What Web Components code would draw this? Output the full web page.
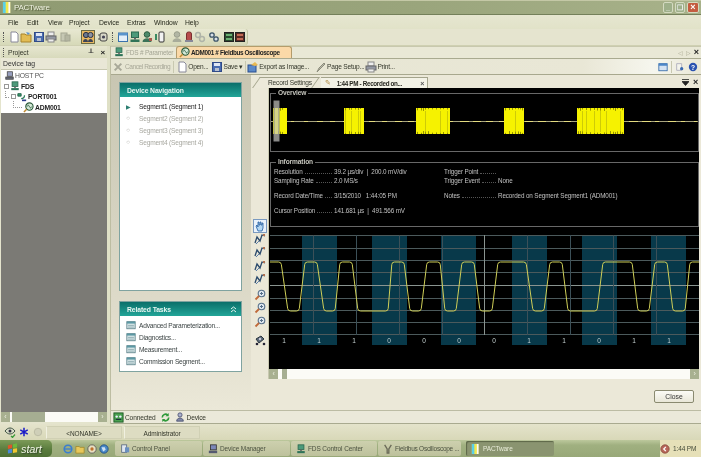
<!DOCTYPE html>
<html>
<head>
<meta charset="utf-8">
<title>PACTware</title>
<style>
    html, body { margin: 0; padding: 0; }
    body { width: 701px; height: 457px; overflow: hidden; background: #ebe8d8; font-family: "Liberation Sans", Arial, sans-serif; font-size: 7px; color: #333; filter: blur(.3px); }
    .main { display: flex; height: 378px; background: #dfe0c6; }
</style>
</head>
<body>
<pact-titlebar></pact-titlebar>
<pact-menubar></pact-menubar>
<pact-toolbar></pact-toolbar>
<div class="main">
    <project-panel></project-panel>
    <doc-panel></doc-panel>
</div>
<pact-status></pact-status>
<win-taskbar></win-taskbar>

<script>
const ICONS = {
    doc: '<path d="M3 1h5l2 2v8H3z" fill="#fff" stroke="#889"/>',
    folder: '<path d="M1 3h4l1 1h5v7H1z" fill="#e2bc54" stroke="#a8842c"/><path d="M6 1l4 1-2 2z" fill="#5a92d0"/>',
    save: '<rect x="1.500" y="1.500" width="9" height="9" fill="#4a6cb0" stroke="#304a88"/><rect x="3" y="2" width="6" height="3" fill="#dfe6f4"/><rect x="4" y="7" width="4" height="3" fill="#b8c0d0"/>',
    print: '<rect x="3" y="1" width="6" height="4" fill="#eee" stroke="#888"/><rect x="1" y="5" width="10" height="4" fill="#9499a4" stroke="#666"/><rect x="3" y="8" width="6" height="3" fill="#eee" stroke="#888"/>',
    pages: '<rect x="1" y="2" width="6" height="8" fill="#c6c8b4" stroke="#a4a692"/><rect x="5" y="4" width="5" height="6" fill="#b4b6a2" stroke="#a4a692"/>',
    people: '<circle cx="4" cy="4" r="2.600" fill="#6a7890" stroke="#2c3040"/><circle cx="8.500" cy="4" r="2.600" fill="#8a92a0" stroke="#2c3040"/><path d="M1 11c0-4 5-4 5 0zM6 11c0-4 5-4 5 0z" fill="#3a4256"/>',
    chip: '<rect x="3" y="2" width="7" height="8" rx="2" fill="#d8d8c8" stroke="#444"/><circle cx="6.500" cy="6" r="1.600" fill="#445"/><path d="M1 4h2M1 8h2" stroke="#555"/>',
    window: '<rect x="1.500" y="2" width="9" height="8.500" fill="#e4eef8" stroke="#3a72ac"/><rect x="1.500" y="2" width="9" height="2.500" fill="#5a94cc"/>',
    pcgreen: '<rect x="2.500" y="1" width="7" height="5.500" fill="#4c9a7a" stroke="#2a6a50"/><rect x="5" y="6.500" width="2" height="2" fill="#666"/><rect x="1.500" y="8.500" width="9" height="2.500" fill="#2f7358"/>',
    usergreen: '<circle cx="6" cy="3.500" r="2.800" fill="#4c8a6a" stroke="#2c5a40"/><path d="M1.500 11c0-5 9-5 9 0z" fill="#3c7358"/><rect x="8" y="7" width="3" height="3" fill="#a8584c"/>',
    barrel: '<rect x="5" y="1" width="5" height="10" rx="1" fill="#f2f2f2" stroke="#333"/><path d="M2 3v6" stroke="#3a8a62" stroke-width="2"/>',
    usergrey: '<circle cx="6" cy="3.500" r="2.800" fill="#b2b6a4" stroke="#9a9e8c"/><path d="M1.500 11c0-5 9-5 9 0z" fill="#a8ac9a"/>',
    redtag: '<rect x="3.500" y="1" width="5" height="9" rx="2" fill="#b84c4c" stroke="#7a3030"/><rect x="2" y="9" width="8" height="2" fill="#889"/>',
    gears: '<circle cx="4" cy="4" r="2.400" fill="none" stroke="#b0b4a8" stroke-width="1.500"/><circle cx="8" cy="8" r="2.400" fill="none" stroke="#b0b4a8" stroke-width="1.500"/>',
    gearsdark: '<circle cx="4" cy="4" r="2.200" fill="#d8e0e8" stroke="#3c5468" stroke-width="1.300"/><circle cx="8" cy="8" r="2.200" fill="#d8e0e8" stroke="#3c5468" stroke-width="1.300"/>',
    scopegreen: '<rect x="1.500" y="1.500" width="9" height="9" fill="#2a4a2e" stroke="#222"/><rect x="3" y="3" width="6" height="2" fill="#6ab072"/><rect x="3" y="7" width="6" height="2" fill="#6ab072"/>',
    scopered: '<rect x="1.500" y="1.500" width="9" height="9" fill="#5a2a24" stroke="#222"/><rect x="3" y="3" width="6" height="2" fill="#c06a54"/><rect x="3" y="7" width="6" height="2" fill="#c06a54"/>',
    host: '<rect x="3" y="1" width="7" height="6" fill="#98a0c0" stroke="#444"/><rect x="1" y="8" width="10" height="3" fill="#666a78" stroke="#444"/>',
    port: '<path d="M1 2h4v3H1z" fill="#3c9a72" stroke="#1c5a40"/><path d="M5 8c3 0 4-1 4-4" fill="none" stroke="#2c7c5a" stroke-width="1.500"/><path d="M6 10h5" stroke="#2c3c8a" stroke-width="2"/>',
    scope: '<circle cx="7" cy="5" r="4" fill="#d6ead9" stroke="#2a5a3a" stroke-width="1.200"/><path d="M4.500 5c1-2 1.500-2 2.500 0s1.500 2 2.500 0" fill="none" stroke="#2a5a3a"/><path d="M4 8l-3 3" stroke="#c08a30" stroke-width="1.600"/>',
    cancel: '<path d="M2 2l8 8M10 2l-8 8" stroke="#a8a898" stroke-width="2.400"/>',
    exportimg: '<rect x="1" y="4" width="8" height="7" fill="#5a88c8" stroke="#2a4f90"/><path d="M4 4l4-3 3 3-3 1z" fill="#e8b850"/>',
    brush: '<path d="M2 11l2-4 5-5 1 1-5 5z" fill="#b8b8a8" stroke="#8c8c7c"/>',
    panel: '<rect x="1" y="2" width="10" height="8.500" fill="#d4e2f2" stroke="#3268a8"/><rect x="1" y="2" width="10" height="2.500" fill="#4c86c8"/>',
    props: '<path d="M2 2h6v8H2z" fill="#f4f4ec" stroke="#aab"/><circle cx="8" cy="8" r="2" fill="#3a6ab0"/>',
    help: '<circle cx="6" cy="6" r="5" fill="#2a52b0"/><text x="6" y="9" font-size="8" font-weight="700" text-anchor="middle" fill="#fff" font-family="Liberation Sans">?</text>',
    hand: '<path d="M4 11L2 6l1-1 1 2V2h1v3h1V2h1v3h1V3h1v5l-1 3z" fill="#b4d8f4" stroke="#1e5aa0" stroke-width=".8"/>',
    wave: '<path d="M1 10l2-6 3 4 2-6 3 1" fill="none" stroke="#2b4a6c" stroke-width="1.300"/><path d="M2 11l3-3" stroke="#5a7ea8"/><rect x="9" y="1" width="2" height="2" fill="#b07050"/>',
    zoom: '<circle cx="7.500" cy="4.500" r="3.300" fill="#e0e8f0" stroke="#56708a" stroke-width="1.100"/><path d="M5 7l-3.500 3.500" stroke="#c06a3a" stroke-width="1.800"/><path d="M6 4.500h3M7.500 3v3" stroke="#56708a"/>',
    camera: '<path d="M2 5l5-3 3 3-5 4z" fill="#5a6a78" stroke="#2c3640"/><circle cx="3" cy="10" r="1.300" fill="#223"/><circle cx="10" cy="10" r="1.300" fill="#223"/><circle cx="6" cy="5" r="1.200" fill="#ccd"/>',
    task: '<rect x="1" y="2" width="10" height="8.500" fill="#d8e6e8" stroke="#5a8088"/><rect x="1" y="2" width="10" height="2.300" fill="#5c98a4"/><path d="M2.500 6.500h7M2.500 8.500h7" stroke="#8aa8ae"/>',
    connected: '<rect x="1" y="1" width="10" height="10" fill="#48a050" stroke="#1c5a24"/><circle cx="4" cy="5" r="1.300" fill="#eef"/><circle cx="8" cy="5" r="1.300" fill="#eef"/><path d="M3 8h6" stroke="#113"/>',
    sync: '<path d="M2.500 6a3.500 3.500 0 0 1 6-2.500M9.500 6a3.500 3.500 0 0 1-6 2.500" fill="none" stroke="#2f9a3a" stroke-width="1.800"/><path d="M9.500 1v3.500H6M2.500 11V7.500H6" fill="#2f9a3a"/>',
    device: '<circle cx="6" cy="3.500" r="2.500" fill="#aab0cc" stroke="#4a5070"/><path d="M2 11c0-5 8-5 8 0z" fill="#8088a8" stroke="#4a5070"/>',
    eye: '<path d="M1 5c3-4 7-4 10 0-3 4-7 4-10 0z" fill="#d8dcc8" stroke="#3c5040"/><circle cx="6" cy="5" r="1.500" fill="#334"/><path d="M7 10l1.500 1.500 2.500-3" fill="none" stroke="#3a9a3a" stroke-width="1.200"/>',
    star: '<path d="M6 1v10M1.500 3.500l9 5M10.500 3.500l-9 5" stroke="#1a1ac8" stroke-width="1.800"/>',
    info: '<circle cx="6" cy="6" r="4.500" fill="#cfcfb8" stroke="#b8b8a0"/>',
    app: '<rect x="1" y="0" width="8" height="12" fill="#f2e84c"/><rect x="1" y="0" width="3" height="12" fill="#5ad0e8"/><rect x="7" y="0" width="2" height="12" fill="#fafafa"/>',
    flag: '<path d="M1 2.500l4.500-1v4L1 6.500z" fill="#e0552a"/><path d="M6.500 1.300l4.500-1v4.500l-4.500.7z" fill="#6cb83c"/><path d="M1 7.300l4.500-.9v4.200L1 11.500z" fill="#4a88d8"/><path d="M6.500 6.300l4.500-.7v4.500l-4.500.7z" fill="#f0c830"/>',
    ie: '<circle cx="6" cy="6" r="4.500" fill="none" stroke="#3a7ed0" stroke-width="2"/><path d="M2 6h8" stroke="#3a7ed0" stroke-width="1.500"/>',
    explorer: '<path d="M1 3h4l1 1h5v7H1z" fill="#e8c85a" stroke="#a08a30"/>',
    media: '<circle cx="6" cy="6" r="5" fill="#e8e0c0" stroke="#555"/><circle cx="6" cy="6" r="2" fill="#c0702c"/>',
    globe: '<circle cx="6" cy="6" r="5" fill="#4a8ac8" stroke="#1f4a80"/><path d="M3 4h4l1 3-3 2z" fill="#cfe2f4"/>',
    panelapp: '<rect x="2" y="1" width="6" height="9" fill="#dfe6f0" stroke="#5a6a80"/><rect x="6" y="4" width="5" height="6" fill="#6a90c0"/>',
    devman: '<rect x="3" y="1" width="7" height="6" fill="#7c88b8" stroke="#333"/><rect x="1" y="8" width="10" height="3" fill="#555a70"/>',
    scopeapp: '<path d="M2 1l3 5v5h2V6l3-5" fill="none" stroke="#6a6a58" stroke-width="1.600"/>',
    back: '<circle cx="6" cy="6" r="5" fill="#b8685a" stroke="#8a4a3c"/><path d="M7 3.500L4.500 6 7 8.500" fill="none" stroke="#fff" stroke-width="1.500"/>'
};

class PactIcon extends HTMLElement {
    constructor() {
        super();
        const s = this.getAttribute('size') || 12;
        this.attachShadow({mode: 'open'}).innerHTML = `
            <style>:host { display: block; flex: none; width: ${s}px; height: ${s}px; } svg { display: block; }</style>
            <svg width="${s}" height="${s}" viewBox="0 0 12 12">${ICONS[this.getAttribute('name')] || ''}</svg>
        `;
    }
}

class PactTitlebar extends HTMLElement {
    constructor() {
        super();
        this.attachShadow({mode: 'open'}).innerHTML = `
            <style>
                :host { display: flex; align-items: center; height: 15px; padding-left: 2px; box-sizing: border-box;
                    background: linear-gradient(to right, #8f9a72, #9aa57c 60%, #a8b28a), #8f9a70;
                    border-top: 1px solid #c4c8a6; border-bottom: 1px solid #74805a; }
                .title { margin-left: 1px; color: #eef0e0; font-size: 8px; letter-spacing: -.25px; text-shadow: 1px 1px 1px #56603c; }
                .btns { margin-left: auto; display: flex; gap: 2px; padding-right: 2px; }
                .b { width: 10px; height: 11px; box-sizing: border-box; border: 1px solid #d4dac0; border-radius: 2px; background: #9fb08a; color: #eee; font-size: 7px; font-weight: 700; line-height: 9px; text-align: center; }
                .x { width: 12px; background: #c45c40; color: #fff; font-size: 9px; }
            </style>
            <pact-icon name="app" size="11"></pact-icon>
            <span class="title">PACTware</span>
            <div class="btns"><div class="b">_</div><div class="b">❐</div><div class="b x">×</div></div>
        `;
    }
}

class PactMenubar extends HTMLElement {
    constructor() {
        super();
        const items = [['File',19],['Edit',21],['View',21],['Project',30],['Device',28],['Extras',27],['Window',31],['Help',20]];
        this.attachShadow({mode: 'open'}).innerHTML = `
            <style>
                :host { display: flex; align-items: center; height: 14px; padding-left: 8px; box-sizing: border-box;
                    background: linear-gradient(#e6e6d0, #e1e2c8); color: #26291c; font-size: 6.800px; letter-spacing: -.1px; }
                span { display: block; }
            </style>
            ${items.map(i => `<span style="width:${i[1]}px">${i[0]}</span>`).join('')}
        `;
    }
}

class PactToolbar extends HTMLElement {
    constructor() {
        super();
        const items = [['doc',2.7],['folder',.3],['save',1],['print',0],['pages',3],['people',10,1],['chip',3],['|',3],['window',3],['pcgreen',0],['usergreen',0],['barrel',1],['usergrey',5],['redtag',0],['gears',-1],['gearsdark',2],['scopegreen',3],['scopered',-1]];
        this.attachShadow({mode: 'open'}).innerHTML = `
            <style>
                :host { display: block; height: 17px; background: #e5e4cf; box-sizing: border-box; border-bottom: 1px solid #cfd0b2; }
                .bar { display: flex; align-items: center; width: 248px; height: 16px; box-sizing: border-box; padding-left: 3px;
                    background: linear-gradient(#e8e8d2, #d6d9b8); border-right: 1px solid #c0c4a0; border-radius: 0 3px 3px 0; }
                .grip { width: 1px; height: 10px; border-left: 1px dotted #555; flex: none; }
                .on { outline: 1px solid #6a6a44; background: #e8b860; }
            </style>
            <div class="bar">
                <div class="grip"></div>
                ${items.map(i => i[0] === '|'
                    ? `<div class="grip" style="margin-left:${i[1]}px"></div>`
                    : `<pact-icon name="${i[0]}" class="${i[2] ? 'on' : ''}" style="margin-left:${i[1]}px"></pact-icon>`).join('')}
            </div>
        `;
    }
}

class PactScrollbar extends HTMLElement {
    constructor() {
        super();
        const gap = this.getAttribute('gap') || 0;
        const thumb = this.getAttribute('thumb') || 5;
        this.attachShadow({mode: 'open'}).innerHTML = `
            <style>
                :host { display: flex; height: 10px; background: #fbfbf6; }
                .a { width: 9px; flex: none; background: #a8b090; color: #eef0e2; font-size: 7px; line-height: 10px; text-align: center; }
                .t { background: #a6ae92; width: ${thumb}px; margin-left: ${gap}px; flex: none; }
                .s { flex: 1; }
            </style>
            <div class="a">‹</div><div class="t"></div><div class="s"></div><div class="a">›</div>
        `;
    }
}

class ProjectPanel extends HTMLElement {
    constructor() {
        super();
        this.attachShadow({mode: 'open'}).innerHTML = `
            <style>
                :host { display: flex; flex-direction: column; width: 107px; flex: none; margin-right: 3px; padding-left: 1px; box-sizing: border-box; background: #e4e4cd; }
                .head { display: flex; align-items: center; height: 12px; gap: 3px; padding: 0 2px; background: linear-gradient(#e6e6d0, #d8dabc); color: #33362a; font-size: 6.800px; letter-spacing: -.1px; }
                .grip { width: 1px; height: 9px; border-left: 1px dotted #555; }
                .pin { margin-left: auto; font-size: 7px; font-weight: 700; color: #333; }
                .close { font-size: 8px; font-weight: 700; color: #222; margin-left: 4px; }
                .col { height: 11px; padding: 0 2px; background: #e9e7d6; color: #333; font-size: 6.800px; line-height: 11px; border-bottom: 1px solid #c8c8b0; }
                .tree { background: #fff; height: 43px; font-size: 6.800px; letter-spacing: -.2px; color: #222; }
                .r { display: flex; align-items: center; height: 10.700px; gap: 1px; }
                .plus { width: 5px; height: 5px; box-sizing: border-box; border: 1px solid #999; flex: none; }
                .elbow { width: 3px; height: 6px; border-left: 1px dotted #999; border-bottom: 1px dotted #999; flex: none; margin-top: -5px; }
                .grey { flex: 1; background: #7b7a75; }
            </style>
            <div class="head"><div class="grip"></div>Project<span class="pin">╨</span><span class="close">×</span></div>
            <div class="col">Device tag</div>
            <div class="tree">
                <div class="r" style="padding-left:4px"><pact-icon name="host" size="9"></pact-icon><span style="color:#555">HOST PC</span></div>
                <div class="r" style="padding-left:3px"><div class="plus"></div><pact-icon name="pcgreen" size="10"></pact-icon><b>FDS</b></div>
                <div class="r" style="padding-left:4px"><div class="elbow"></div><div class="plus" style="margin-left:1px"></div><pact-icon name="port" size="10"></pact-icon><b>PORT001</b></div>
                <div class="r" style="padding-left:12px"><div class="elbow" style="width:8px"></div><pact-icon name="scope" size="11"></pact-icon><b>ADM001</b></div>
            </div>
            <div class="grey"></div>
            <pact-scrollbar gap="2" thumb="33"></pact-scrollbar>
            <div style="height:2px"></div>
        `;
    }
}

class DocPanel extends HTMLElement {
    constructor() {
        super();
        this.attachShadow({mode: 'open'}).innerHTML = `
            <style>
                :host { display: flex; flex-direction: column; flex: 1; min-width: 0; background: #ebe8d8; border-left: 1px solid #bdbda2; box-sizing: border-box; }
                .tabs { display: flex; align-items: flex-end; height: 13px; padding-left: 2px; box-sizing: border-box; border-bottom: 1px solid #a9aa90; background: #e9e8d6; border-top: 1px solid #c8c8ae; white-space: nowrap; }
                .t { display: flex; align-items: center; height: 12px; box-sizing: border-box; flex: none; }
                .t1 { width: 63px; padding-left: 1px; color: #a4a594; gap: 2px; font-size: 6.500px; letter-spacing: -.22px; }
                .t2 { width: 116px; padding-left: 2px; gap: 1px; font-size: 6.400px; letter-spacing: -.38px; font-weight: 700; color: #222; background: #fbd9a8; border: 1px solid #b49c6c; border-bottom: 0; border-radius: 3px 3px 0 0; }
                .nav { margin-left: auto; display: flex; gap: 3px; padding: 0 2px 2px 0; color: #a8a890; font-size: 6px; align-items: center; }
                .nav b { color: #222; font-size: 9px; line-height: 8px; }
                .tools { display: flex; align-items: center; height: 16px; box-sizing: border-box; font-size: 6.600px; letter-spacing: -.2px; color: #33362a; border-bottom: 1px solid #a8a88e; white-space: nowrap;
                    background: linear-gradient(to right, #e6e5d2, #e9e7d6 80%, #f6f6ee 92%, #e9e7d6 100%); }
                .tools .i { margin-left: var(--m); display: flex; align-items: center; flex: none; }
                .off { color: #a8a898; letter-spacing: -.45px; }
                .sep { width: 1px; height: 12px; background: #c8c8b0; flex: none; }
                .right { margin-left: auto; display: flex; align-items: center; gap: 3px; padding-right: 3px; }
                .body { flex: 1; display: flex; min-height: 0; }
                .conn { display: flex; align-items: center; height: 14px; box-sizing: border-box; padding-left: 2px; font-size: 6.600px; letter-spacing: -.15px; color: #33362a; background: #ebe9da; border-top: 1px solid #bcbca4; border-bottom: 1px solid #a9aa90; }
                .conn span { margin-left: 1px; }
            </style>
            <div class="tabs">
                <div class="t t1"><pact-icon name="pcgreen" size="10"></pact-icon>FDS # Parameter</div>
                <div class="t t2"><pact-icon name="scope" size="11"></pact-icon>ADM001 # Fieldbus Oscilloscope</div>
                <div class="nav"><span>◁</span><span>▷</span><b>×</b></div>
            </div>
            <div class="tools">
                <div class="i off" style="--m:2px"><pact-icon name="cancel" size="10" style="margin-right:2px"></pact-icon>Cancel Recording</div>
                <div class="sep" style="margin-left:3px"></div>
                <div class="i" style="--m:2px"><pact-icon name="doc"></pact-icon>Open...</div>
                <div class="i" style="--m:3px"><pact-icon name="save"></pact-icon>Save ▾</div>
                <div class="sep" style="margin-left:2px"></div>
                <div class="i" style="--m:1px"><pact-icon name="exportimg"></pact-icon>Export as Image...</div>
                <div class="i" style="--m:6px"><pact-icon name="brush"></pact-icon>Page Setup...</div>
                <div class="i" style="--m:1px"><pact-icon name="print"></pact-icon>Print...</div>
                <div class="right"><pact-icon name="panel" size="10"></pact-icon><div class="sep"></div><pact-icon name="props" size="10"></pact-icon><pact-icon name="help" size="10"></pact-icon></div>
            </div>
            <div class="body">
                <nav-column></nav-column>
                <scope-view></scope-view>
            </div>
            <div class="conn">
                <pact-icon name="connected" size="11"></pact-icon><span>Connected</span>
                <pact-icon name="sync" size="11" style="margin-left:4px"></pact-icon>
                <pact-icon name="device" size="10" style="margin-left:4px"></pact-icon><span style="margin-left:2px">Device</span>
            </div>
        `;
    }
}

class SidePanel extends HTMLElement {
    constructor() {
        super();
        const chev = this.hasAttribute('chevron')
            ? '<svg width="7" height="7" viewBox="0 0 7 7"><path d="M1 3l2.500-2L6 3M1 6l2.500-2L6 6" fill="none" stroke="#e8f6f2"/></svg>' : '';
        this.attachShadow({mode: 'open'}).innerHTML = `
            <style>
                :host { display: flex; flex-direction: column; background: #fff; border: 1px solid #7fa3a0; box-sizing: border-box; }
                .h { display: flex; justify-content: space-between; align-items: center; height: 14px; flex: none; padding: 0 4px 0 7px; color: #e8f6f2; font-size: 6.800px; letter-spacing: -.1px; font-weight: 700;
                    background: linear-gradient(#0a6f6a, #22a598); }
                .c { flex: 1; }
            </style>
            <div class="h"><span>${this.getAttribute('title')}</span>${chev}</div>
            <div class="c"><slot></slot></div>
        `;
    }
}

class NavColumn extends HTMLElement {
    constructor() {
        super();
        const segs = ['Segment1 (Segment 1)', 'Segment2 (Segment 2)', 'Segment3 (Segment 3)', 'Segment4 (Segment 4)'];
        const tasks = ['Advanced Parameterization...', 'Diagnostics...', 'Measurement...', 'Commission Segment...'];
        this.attachShadow({mode: 'open'}).innerHTML = `
            <style>
                :host { display: flex; flex-direction: column; width: 140px; flex: none; box-sizing: border-box; padding: 7px 9px 0 8px; gap: 10px;
                    background: linear-gradient(#c8c6b2, #dedbca 70%, #ebe8d8); font-size: 6.600px; letter-spacing: -.2px; }
                .p1 { height: 209px; }
                .p2 { height: 71px; }
                ul { list-style: none; margin: 0; padding: 3px 0 0 0; }
                li { display: flex; align-items: center; height: 12px; color: #a8a8a0; }
                li:first-child { color: #222; }
                .m { width: 19px; flex: none; display: flex; justify-content: center; padding-right: 3px; box-sizing: border-box; font-size: 6px; color: #a0a098; }
                li:first-child .m { color: #2c7f72; }
                .tasks { padding-top: 3px; }
                .tasks div { display: flex; align-items: center; gap: 3px; height: 12px; padding-left: 6px; color: #3c4444; }
            </style>
            <side-panel class="p1" title="Device Navigation">
                <ul>${segs.map((s, i) => `<li><span class="m">${i ? '○' : '▶'}</span>${s}</li>`).join('')}</ul>
            </side-panel>
            <side-panel class="p2" title="Related Tasks" chevron>
                <div class="tasks">${tasks.map(t => `<div><pact-icon name="task" size="10"></pact-icon>${t}</div>`).join('')}</div>
            </side-panel>
        `;
    }
}

class ScopeView extends HTMLElement {
    constructor() {
        super();
        const tools = [['hand',0,1],['wave',1],['wave',1],['wave',2],['wave',1],['zoom',4],['zoom',1],['zoom',2],['camera',6]];
        this.attachShadow({mode: 'open'}).innerHTML = `
            <style>
                :host { display: flex; flex-direction: column; flex: 1; min-width: 0; font-size: 6.600px; letter-spacing: -.2px; white-space: nowrap; }
                .tabs { display: flex; align-items: flex-end; height: 13px; flex: none; padding-left: 5px; box-sizing: border-box; }
                .tab { position: relative; display: flex; align-items: center; height: 11px; color: #33362a; z-index: 0; flex: none; }
                .r { width: 60px; padding-left: 12px; box-sizing: border-box; }
                .r::before { content: ""; position: absolute; inset: 0; z-index: -1; transform: skewX(-35deg); border: 1px solid #a4a48c; border-bottom: 0; background: #ece9da; }
                .a { width: 107px; margin-left: 5px; padding-left: 4px; box-sizing: border-box; font-size: 6.300px; letter-spacing: -.33px; font-weight: 700; color: #26261e; background: #f3f2e6; border: 1px solid #a4a48c; border-bottom: 0; border-left: 0; }
                .a i { margin: 0 6px 0 0; color: #b08a40; font-style: normal; font-weight: 400; font-size: 7px; }
                .a u { margin-left: auto; margin-right: 3px; text-decoration: none; color: #555; font-size: 7px; }
                .ctl { margin-left: auto; padding: 0 3px 2px 0; display: flex; align-items: center; gap: 4px; font-size: 9px; font-weight: 700; color: #222; line-height: 8px; }
                .row { display: flex; height: 291px; flex: none; }
                .v { width: 18px; flex: none; display: flex; flex-direction: column; align-items: center; padding-top: 132px; box-sizing: border-box; border-right: 1px solid #c8c8b0; }
                .on { outline: 1px solid #7a9ac0; background: #e8f2fc; }
                .screen { width: 430px; flex: none; display: flex; flex-direction: column; }
                .foot { flex: 1; display: flex; justify-content: flex-end; align-items: flex-end; padding: 0 7px 7px 0; }
                button { width: 40px; height: 13px; padding: 0; box-sizing: border-box; border: 1px solid #8a8a70; border-radius: 2px; font: 6.800px "Liberation Sans", Arial, sans-serif; color: #333; background: linear-gradient(#fbfbf6, #e9e7d8); }
            </style>
            <div class="tabs">
                <div class="tab r">Record Settings</div>
                <div class="tab a"><i>✎</i>1:44 PM - Recorded on...<u>×</u></div>
                <div class="ctl"><svg width="7" height="7" viewBox="0 0 7 7"><path d="M0 .5h7M0 2.500h7L3.500 6.500z" stroke="#222" stroke-width=".8" fill="#222"/></svg><span>×</span></div>
            </div>
            <div class="row">
                <div class="v">${tools.map(t => `<pact-icon name="${t[0]}" class="${t[2] ? 'on' : ''}" style="margin-top:${t[1]}px"></pact-icon>`).join('')}</div>
                <div class="screen">
                    <scope-screen></scope-screen>
                    <pact-scrollbar gap="4" thumb="5"></pact-scrollbar>
                </div>
            </div>
            <div class="foot"><button>Close</button></div>
        `;
    }
}

class ScopeScreen extends HTMLElement {
    constructor() {
        super();
        this.attachShadow({mode: 'open'}).innerHTML = `
            <style>
                :host { display: flex; flex-direction: column; flex: 1; min-height: 0; background: #000; color: #c0c0c0; font-size: 6.300px; letter-spacing: -.12px; }
                fieldset { margin: 0 0 0 1px; width: 429px; box-sizing: border-box; padding: 0; border: 1px solid #686868; border-radius: 0; min-width: 0; flex: none; }
                legend { margin-left: 5px; padding: 0 2px; line-height: 10px; height: 10px; font-size: 6.600px; font-weight: 700; color: #c4c4bc; }
                .ov { height: 64px; }
                .ov svg { display: block; }
                .inf { height: 70px; margin-top: 5px; }
                .g { display: grid; grid-template-columns: 60px 110px 54px 1fr; grid-template-rows: 9px 9px 15px 15px; align-items: end; padding: 0 0 0 3px; }
                .l { display: flex; align-items: baseline; line-height: 9px; }
                .l::after { content: ""; flex: 1; margin: 0 2px 0 2px; border-bottom: 1px dotted #555; }
                .x { line-height: 9px; white-space: nowrap; }
                .w { display: block; margin-top: 8px; flex: none; }
            </style>
            <fieldset class="ov"><legend>Overview</legend>
                <svg id="ov" width="427" height="54" viewBox="270 95 427 54"></svg>
            </fieldset>
            <fieldset class="inf"><legend>Information</legend>
                <div class="g">
                    <div class="l">Resolution</div><div class="x">39.2 µs/div &nbsp;|&nbsp; 200.0 mV/div</div><div class="l">Trigger Point</div><div class="x"></div>
                    <div class="l">Sampling Rate</div><div class="x">2.0 MS/s</div><div class="l">Trigger Event</div><div class="x">None</div>
                    <div class="l">Record Date/Time</div><div class="x">3/15/2010 &nbsp; 1:44:05 PM</div><div class="l">Notes</div><div class="x">Recorded on Segment Segment1 (ADM001)</div>
                    <div class="l">Cursor Position</div><div class="x">141.681 µs &nbsp;|&nbsp; 491.566 mV</div><div></div><div></div>
                </div>
            </fieldset>
            <svg class="w" id="wave" width="430" height="120" viewBox="268 235 430 120"></svg>
        `;
        this.drawOverview();
        this.drawWave();
    }

    drawOverview() {
        const bursts = [[272,286],[343,363],[415,449],[503,523],[576,623]];
        let seed = 7, out = '<path d="M270 118.500H697" stroke="#a8a480"/>';
        const rnd = () => (seed = (seed * 137 + 59) % 1009) / 1009;
        for (let x = 290; x < 697; x += 13) {
            out += `<path d="M${x} 118.500h${3 + Math.floor(rnd() * 7)}" stroke="#e4dc80"/>`;
        }
        bursts.forEach(b => {
            out += `<rect x="${b[0]}" y="105" width="${b[1] - b[0]}" height="26" fill="#f6f200"/>`;
            for (let x = b[0] + 1; x < b[1] - 1; x += 2 + Math.floor(rnd() * 3)) {
                out += `<path d="M${x + .5} 105V${106 + rnd() * 2}M${x + .5} ${130 - rnd() * 2}V131" stroke="#000" stroke-opacity=".4"/>`;
                if (rnd() > .7) out += `<path d="M${x + .5} 108V129" stroke="#b4b00c" stroke-opacity=".6"/>`;
            }
        });
        out += '<rect x="273" y="98" width="5" height="40" fill="#c8c8c0" fill-opacity=".7" stroke="#888"/>';
        this.shadowRoot.getElementById('ov').innerHTML = out;
    }

    drawWave() {
        const bands = [301, 371, 440, 511, 581, 650];
        const hs = [235, 248, 260, 272, 285, 298, 310, 322, 334];
        const vs = [312, 355, 398, 441, 483, 526, 569, 612, 655];
        const bits = '111000011011';
        // signal corners, alternating high and low
        const pts = [[269,262],[280,262],[287,311],[298,311],[304,262],[316,262],[323,311],[334,311],[339,262],[351,262],[357,311],[387,311],[391,262],[403,262],[409,311],[420,311],[426,262],[439,262],[444,311],[455,311],[461,262],[473,262],[479,311],[491,311],[497,262],[525,262],[532,311],[543,311],[549,262],[561,262],[567,311],[596,311],[602,262],[631,262],[637,311],[648,311],[654,262],[666,262],[672,311],[684,311],[689,262],[698,262]];
        let out = '';
        bands.forEach(x => out += `<rect x="${x}" y="235" width="35" height="110" fill="#08394a"/>`);
        hs.forEach(y => out += `<path d="M269 ${y + .5}H698" stroke="${y === 285 ? '#8a9490' : '#4c5a5c'}"/>`);
        vs.forEach(x => out += `<path d="M${x + .5} 235V335" stroke="${x === 483 ? '#8a9490' : '#3c5058'}"/>`);
        let d = `M${pts[0]}`;
        for (let i = 1; i < pts.length - 1; i++) {
            const p = pts[i], a = pts[i - 1], b = pts[i + 1];
            const la = Math.hypot(p[0] - a[0], p[1] - a[1]), lb = Math.hypot(p[0] - b[0], p[1] - b[1]);
            const r = 2.5;
            d += `L${p[0] + (a[0] - p[0]) * r / la} ${p[1] + (a[1] - p[1]) * r / la}Q${p[0]} ${p[1]} ${p[0] + (b[0] - p[0]) * r / lb} ${p[1] + (b[1] - p[1]) * r / lb}`;
        }
        d += `L${pts[pts.length - 1]}`;
        out += `<path d="${d}" fill="none" stroke="#cfcf58"/>`;
        bits.split('').forEach((b, i) => out += `<text x="${283 + i * 35}" y="343" font-size="6.500" text-anchor="middle" fill="#c4d0d0" font-family="Liberation Sans">${b}</text>`);
        this.shadowRoot.getElementById('wave').innerHTML = out;
    }
}

class PactStatus extends HTMLElement {
    constructor() {
        super();
        this.attachShadow({mode: 'open'}).innerHTML = `
            <style>
                :host { display: flex; align-items: center; height: 16px; box-sizing: border-box; padding-left: 4px; background: linear-gradient(#e4e3cb, #d8d8b8); font-size: 6.500px; letter-spacing: -.1px; color: #33362a; }
                .c { height: 13px; line-height: 13px; text-align: center; width: 76px; box-sizing: border-box; background: #dddcc2; border: 1px solid #d0d0b4; border-left-color: #f0f0e0; margin-right: 2px; flex: none; }
            </style>
            <pact-icon name="eye"></pact-icon>
            <pact-icon name="star" size="10" style="margin-left:3px"></pact-icon>
            <pact-icon name="info" size="10" style="margin-left:4px;margin-right:3px"></pact-icon>
            <div class="c">&lt;NONAME&gt;</div>
            <div class="c">Administrator</div>
        `;
    }
}

class WinTaskbar extends HTMLElement {
    constructor() {
        super();
        const tasks = [['panelapp','Control Panel',87],['devman','Device Manager',87],['pcgreen','FDS Control Center',86],['scopeapp','Fieldbus Oscilloscope ...',83]];
        this.attachShadow({mode: 'open'}).innerHTML = `
            <style>
                :host { display: flex; align-items: center; height: 17px; box-sizing: border-box; background: linear-gradient(#bcc89c, #a0b080 30%, #98a878); font-size: 6.500px; letter-spacing: -.12px; color: #4c5240; overflow: hidden; }
                .start { display: flex; align-items: center; gap: 3px; width: 52px; height: 17px; box-sizing: border-box; padding-left: 7px; flex: none; border-radius: 0 5px 5px 0; background: linear-gradient(#7c9a58, #587a3c 60%, #4e7034); color: #f2f6e6; font: italic 400 11px "Liberation Sans", Arial, sans-serif; text-shadow: 1px 1px 1px #33482a; }
                .q { display: flex; gap: 2px; margin-left: 11px; width: 52px; flex: none; }
                .b { display: flex; align-items: center; gap: 2px; height: 15px; box-sizing: border-box; padding-left: 5px; flex: none; background: linear-gradient(#cdd0ae, #bdc19c); border-radius: 2px; margin-right: 1px; white-space: nowrap; }
                .b.long { letter-spacing: -.25px; }
                .act { width: 88px; margin-left: 4px; background: #8a9470; color: #e8ecd8; box-shadow: inset 1px 1px 1px #5c6648; }
                .tray { margin-left: auto; display: flex; align-items: center; gap: 3px; width: 41px; height: 17px; flex: none; box-sizing: border-box; background: #e6e0b8; color: #444a38; }
            </style>
            <div class="start"><pact-icon name="flag" size="11"></pact-icon>start</div>
            <div class="q"><pact-icon name="ie" size="10"></pact-icon><pact-icon name="explorer" size="10"></pact-icon><pact-icon name="media" size="10"></pact-icon><pact-icon name="globe" size="10"></pact-icon></div>
            ${tasks.map(t => `<div class="b${t[2] === 83 ? ' long' : ''}" style="width:${t[2]}px"><pact-icon name="${t[0]}" size="10"></pact-icon>${t[1]}</div>`).join('')}
            <div class="b act"><pact-icon name="app" size="10"></pact-icon>PACTware</div>
            <div class="tray"><pact-icon name="back" size="10"></pact-icon>1:44 PM</div>
        `;
    }
}

window.customElements.define('pact-icon', PactIcon);
window.customElements.define('pact-titlebar', PactTitlebar);
window.customElements.define('pact-menubar', PactMenubar);
window.customElements.define('pact-toolbar', PactToolbar);
window.customElements.define('pact-scrollbar', PactScrollbar);
window.customElements.define('project-panel', ProjectPanel);
window.customElements.define('side-panel', SidePanel);
window.customElements.define('nav-column', NavColumn);
window.customElements.define('scope-screen', ScopeScreen);
window.customElements.define('scope-view', ScopeView);
window.customElements.define('doc-panel', DocPanel);
window.customElements.define('pact-status', PactStatus);
window.customElements.define('win-taskbar', WinTaskbar);
</script>
</body>
</html>
